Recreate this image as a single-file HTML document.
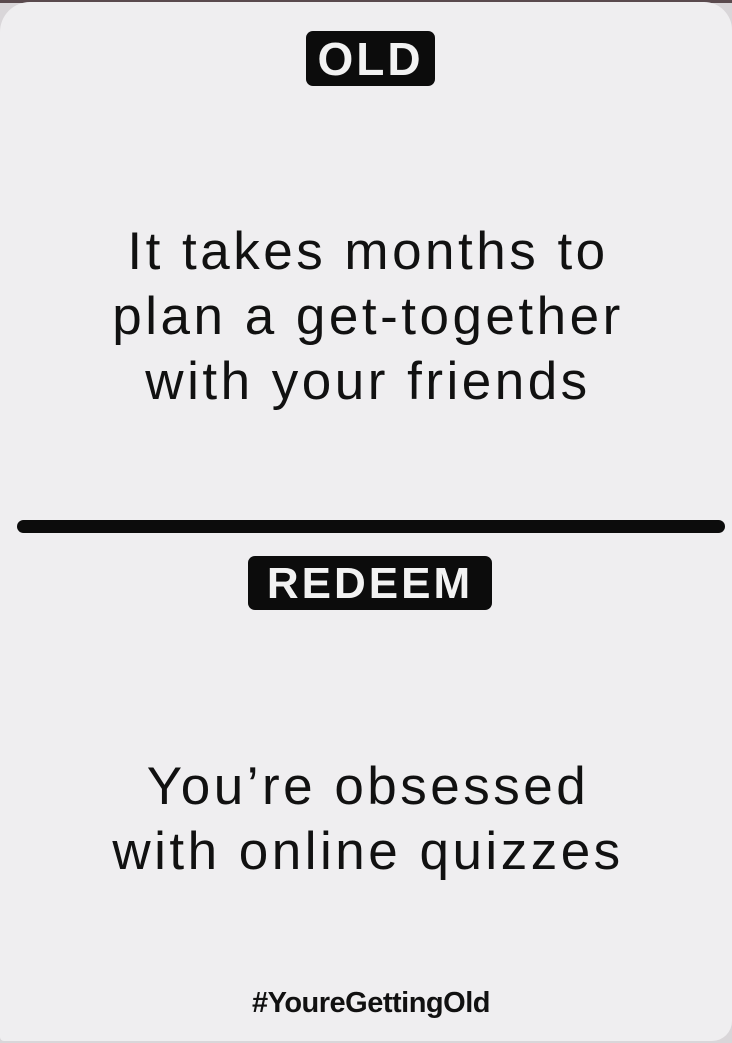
<!DOCTYPE html>
<html><head><meta charset="utf-8"><style>
html,body{margin:0;padding:0;}
body{width:732px;height:1043px;background:#d9d6d9;position:relative;overflow:hidden;font-family:"Liberation Sans",sans-serif;}
.strip{position:absolute;left:0;top:0;width:732px;height:3px;background:#5a4a4e;}
.card{position:absolute;left:0;top:2px;width:732px;height:1039px;background:#efeef0;border-radius:30px 28px 20px 4px;}
.tag{position:absolute;background:#0c0c0c;color:#f2f2f2;font-weight:bold;border-radius:7px;text-align:center;}
.big{position:absolute;left:0;width:736px;text-align:center;color:#111;font-size:53px;line-height:65px;letter-spacing:3.5px;}
.line{position:absolute;left:17px;top:520px;width:708px;height:13px;background:#0c0c0c;border-radius:7px;}
.hash{position:absolute;left:0;width:742px;text-align:center;top:987px;font-weight:bold;font-size:29px;color:#111;letter-spacing:-0.5px;}
</style></head><body>
<div class="strip"></div>
<div class="card"></div>
<div class="tag" style="left:306px;top:31px;width:129px;height:55px;font-size:46px;line-height:56px;letter-spacing:3px;">OLD</div>
<div class="big" style="top:219px;">It takes months to<br>plan a get-together<br>with your friends</div>
<div class="line"></div>
<div class="tag" style="left:248px;top:556px;width:244px;height:54px;font-size:44px;line-height:56px;letter-spacing:3px;">REDEEM</div>
<div class="big" style="top:754px;">You’re obsessed<br>with online quizzes</div>
<div class="hash">#YoureGettingOld</div>
</body></html>
